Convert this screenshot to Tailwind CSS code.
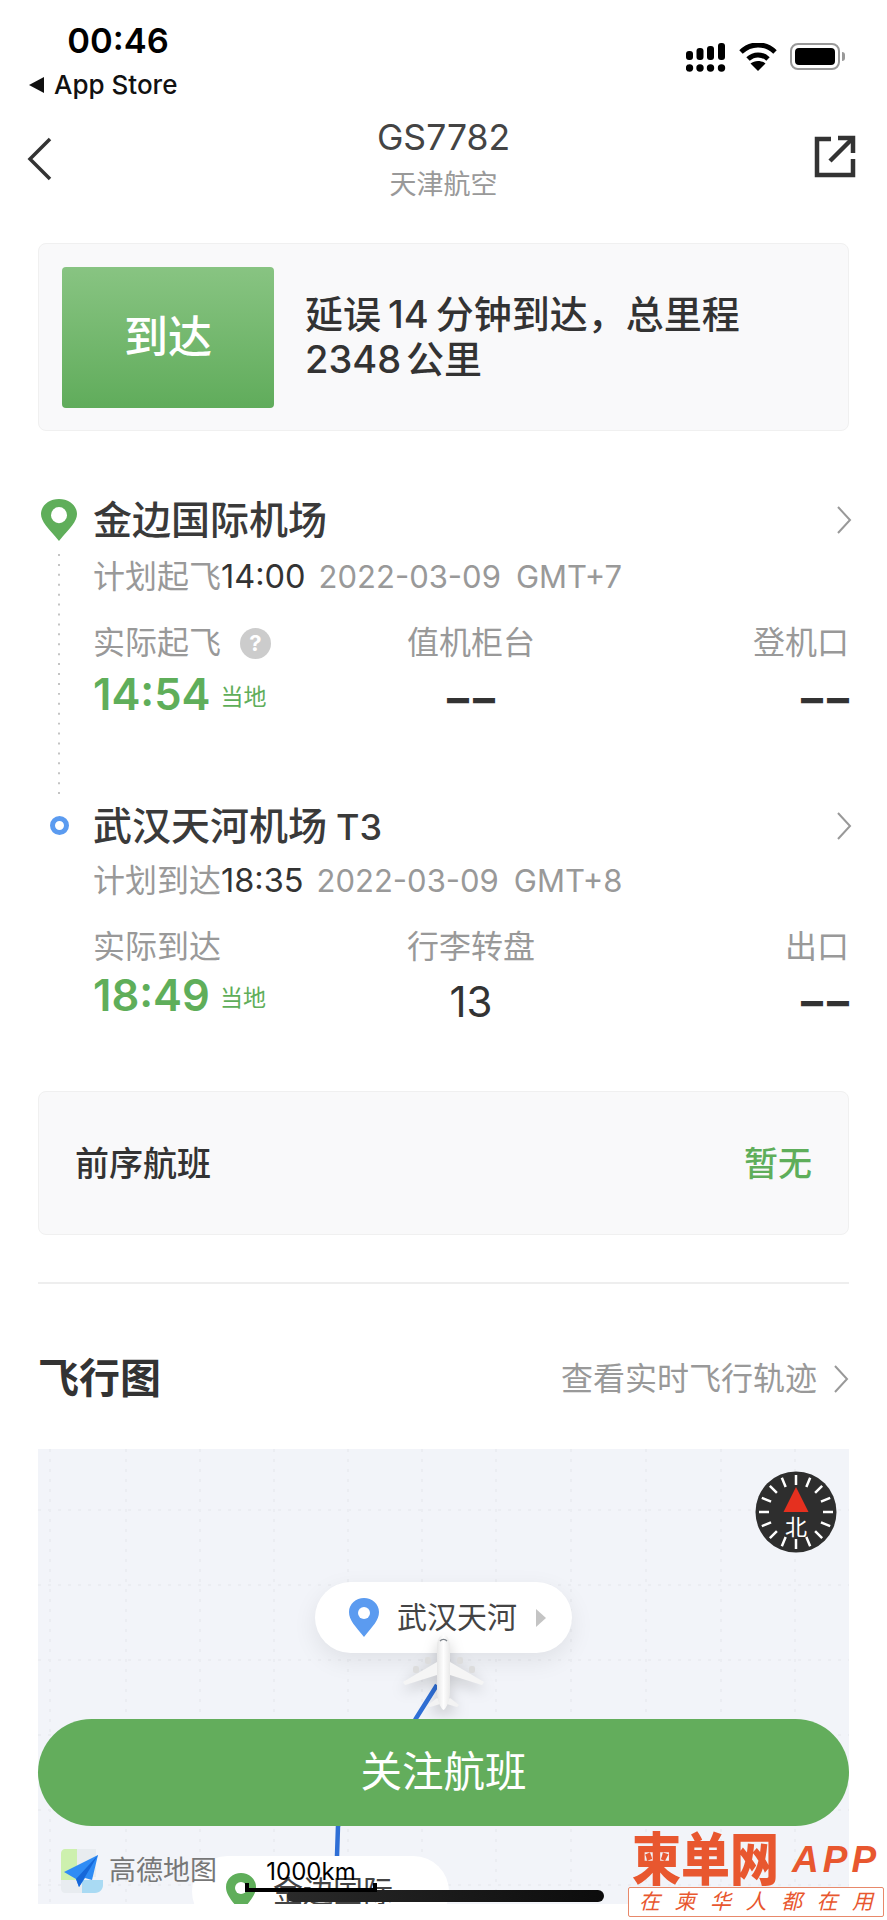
<!DOCTYPE html>
<html lang="zh-CN">
<head>
    <meta charset="UTF-8">
    <meta name="viewport" content="width=device-width, initial-scale=1.0">
    <title>GS7782 - 天津航空</title>
    <script src="https://cdn.jsdelivr.net/npm/@tailwindcss/browser@4"></script>
</head>
<body class="bg-white">
<div class="relative w-[887px] h-[1920px] overflow-hidden bg-white text-[#333] font-['Inter','Noto_Sans_CJK_SC',sans-serif]">

    <!-- status bar -->
    <div class="flex justify-between h-[113px] pl-[28px] pr-[42px]">
        <div>
            <div class="w-[180px] pt-[19px] text-center text-[34.500px] leading-[44px] font-semibold text-black">00:46</div>
            <div class="flex items-center gap-[8px] mt-[2px] text-[26px] leading-[40px] text-[#111]">
                <svg width="18" height="18" viewBox="0 0 18 18"><path d="M1 9 16 1v16z" fill="#111"/></svg>
                <span class="font-medium">App Store</span>
            </div>
        </div>
        <div class="flex items-start gap-[13px] pt-[43px]">
            <svg width="40" height="30" viewBox="0 0 40 30" fill="#000">
                <rect x="0" y="8" width="7" height="9" rx="3"/><rect x="10.500" y="5" width="7" height="12" rx="3"/><rect x="21" y="3" width="7" height="14" rx="3"/><rect x="32" y="0" width="7" height="17" rx="3"/>
                <circle cx="3.500" cy="25" r="3.700"/><circle cx="14" cy="25" r="3.700"/><circle cx="24.500" cy="25" r="3.700"/><circle cx="35.500" cy="25" r="3.700"/>
            </svg>
            <svg width="38" height="28" viewBox="0 0 38 28" fill="none" stroke="#000" stroke-width="5">
                <path d="M2 9C12-.500 26-.500 36 9"/><path d="M9 16c6-5.500 14-5.500 20 0"/><path d="M19 28l-7.500-7.500c4-3.500 11-3.500 15 0z" fill="#000" stroke="none"/>
            </svg>
            <div class="flex items-center gap-[2px]">
                <div class="w-[50px] h-[27px] p-[3px] border-2 border-[#999] rounded-[8px]"><div class="h-full w-[40px] bg-black rounded-[4px]"></div></div>
                <div class="w-[3px] h-[9px] bg-[#999] rounded-r-full"></div>
            </div>
        </div>
    </div>

    <!-- nav -->
    <div class="relative h-[130px] text-center">
        <div class="text-[35.500px] leading-[50px] text-[#444]">GS7782</div>
        <div class="text-[27px] leading-[40px] mt-[2px] text-[#999]">天津航空</div>
        <svg class="absolute left-[27px] top-[24px]" width="26" height="44" viewBox="0 0 26 44" fill="none" stroke="#333" stroke-width="3.500"><path d="M23 2 3 22l20 20"/></svg>
        <svg class="absolute left-[810px] top-[22px]" width="46" height="44" viewBox="0 0 46 44" fill="none" stroke="#333" stroke-width="4.500"><path d="M21 4H7v36h36V24"/><path d="M20 26 42 4"/><path d="M28 3h15v15" /></svg>
    </div>

    <!-- status card -->
    <div class="flex items-center mx-[38px] h-[188px] pl-[23px] bg-[#f9f9fa] border border-[#f0f0f0] rounded-[8px]">
        <div class="flex items-center justify-center w-[212px] h-[141px] rounded-[4px] bg-gradient-to-b from-[#88c482] to-[#60ac5b] text-white text-[44px] font-medium">到达</div>
        <div class="ml-[31px] w-[520px] text-[38px] leading-[45px] font-medium text-[#333]">延误<span class="mx-[7px]">14</span>分钟到达，总里程<br>2348<span class="ml-[5px]">公里</span></div>
    </div>

    <!-- departure -->
    <div class="flex mt-[65px] ml-[38px] mr-[38px] h-[306px]">
        <div class="flex flex-col items-center w-[42px] pt-[3px]">
            <svg class="shrink-0" width="38" height="42" viewBox="0 0 38 39" preserveAspectRatio="none"><path d="M19 39C8 27 1 21 1 14 1 6 9 0 19 0s18 6 18 14c0 7-7 13-18 25z" fill="#5fae5a"/><ellipse cx="19" cy="15" rx="8" ry="7.500" fill="#fff"/></svg>
            <svg class="mt-[13px]" width="2" height="250" viewBox="0 0 2 250"><path d="M1 0v250" stroke="#c4c4c4" stroke-width="2" stroke-dasharray="2 8"/></svg>
        </div>
        <div class="flex-1 ml-[13px]">
            <div class="flex justify-between items-center h-[48px] text-[39px] font-medium text-[#3a3a3a]">
                <span>金边国际机场</span>
                <svg class="-mr-[3px]" width="16" height="30" viewBox="0 0 16 30" fill="none" stroke="#999" stroke-width="2"><path d="M2 2l12 13L2 28"/></svg>
            </div>
            <div class="flex items-center h-[40px] mt-[13px] text-[31px] text-[#999]">
                <span class="text-[32px]">计划起飞</span><span class="text-[32.500px] text-[#333]">14:00</span><span class="ml-[13px]">2022-03-09</span><span class="ml-[15px]">GMT+7</span>
            </div>
            <div class="grid grid-cols-3 mt-[26px] text-[32px] leading-[40px] text-[#999]">
                <div class="flex items-center gap-[19px]">实际起飞<span class="flex items-center justify-center w-[31px] h-[31px] rounded-full bg-[#ccc] text-white text-[22px] font-bold">?</span></div>
                <div class="text-center">值机柜台</div>
                <div class="text-right">登机口</div>
            </div>
            <div class="grid grid-cols-3 items-center h-[50px] -mt-[1px]">
                <div class="flex items-center gap-[10px] text-[#5fae5a]"><span class="text-[43.500px] font-semibold">14:54</span><span class="text-[23px] mt-[6px]">当地</span></div>
                <div class="text-center text-[44px] leading-[50px] font-bold mt-[6px] pl-[4px] tracking-[4px] text-[#333]">––</div>
                <div class="text-right text-[44px] leading-[50px] font-bold mt-[6px] tracking-[4px] -mr-[4px] text-[#333]">––</div>
            </div>
        </div>
    </div>

    <!-- arrival -->
    <div class="flex ml-[38px] mr-[38px] h-[221px]">
        <div class="flex flex-col items-center w-[42px] pt-[14px]">
            <div class="w-[19px] h-[19px] border-[5px] border-[#5b9bf0] rounded-full"></div>
        </div>
        <div class="flex-1 ml-[13px]">
            <div class="flex justify-between items-center h-[48px] text-[39px] font-medium text-[#3a3a3a]">
                <span>武汉天河机场<span class="ml-[9px] text-[36px]">T3</span></span>
                <svg class="-mr-[3px]" width="16" height="30" viewBox="0 0 16 30" fill="none" stroke="#999" stroke-width="2"><path d="M2 2l12 13L2 28"/></svg>
            </div>
            <div class="flex items-center h-[40px] mt-[11px] text-[31px] text-[#999]">
                <span class="text-[32px]">计划到达</span><span class="text-[32.500px] text-[#333]">18:35</span><span class="ml-[13px]">2022-03-09</span><span class="ml-[15px]">GMT+8</span>
            </div>
            <div class="grid grid-cols-3 mt-[26px] text-[32px] leading-[40px] text-[#999]">
                <div>实际到达</div>
                <div class="text-center">行李转盘</div>
                <div class="text-right">出口</div>
            </div>
            <div class="grid grid-cols-3 items-center h-[50px] -mt-[4px]">
                <div class="flex items-center gap-[10px] text-[#5fae5a]"><span class="text-[43.500px] font-semibold">18:49</span><span class="text-[23px] mt-[6px]">当地</span></div>
                <div class="text-center text-[42px] leading-[50px] mt-[13px] text-[#333]">13</div>
                <div class="text-right text-[44px] leading-[50px] font-bold mt-[10px] tracking-[4px] -mr-[4px] text-[#333]">––</div>
            </div>
        </div>
    </div>

    <!-- previous flight -->
    <div class="flex justify-between items-center mx-[38px] mt-[68px] h-[144px] px-[36px] bg-[#f9f9fa] border border-[#f0f0f0] rounded-[8px] text-[34px] font-medium">
        <span>前序航班</span>
        <span class="text-[#5fae5a]">暂无</span>
    </div>

    <div class="mx-[38px] mt-[47px] h-[2px] bg-[#eeeeee]"></div>

    <!-- map heading -->
    <div class="flex justify-between items-center mx-[38px] mt-[65px] h-[60px]">
        <span class="text-[41px] font-bold text-[#333]">飞行图</span>
        <span class="flex items-center gap-[16px] text-[32px] text-[#999]">查看实时飞行轨迹
            <svg width="16" height="30" viewBox="0 0 16 30" fill="none" stroke="#999" stroke-width="2"><path d="M2 2l12 13L2 28"/></svg>
        </span>
    </div>

    <!-- map -->
    <div class="relative mx-[38px] mt-[40px] h-[455px] overflow-hidden bg-[#f2f4f9]">
        <svg class="absolute left-0 top-0" width="811" height="455" viewBox="0 0 811 455" fill="none">
            <g stroke="#ebedf2" stroke-width="2" stroke-dasharray="3 7">
                <path d="M12 0v455M88 0v455M162 0v455M236 0v455M310 0v455M384 0v455M458 0v455M533 0v455M608 0v455M683 0v455M757 0v455"/>
                <path d="M0 61h811M0 136h811M0 211h811M0 286h811M0 361h811M0 436h811"/>
            </g>
            <path d="M399 236 377 271 300 377 299 407" stroke="#2f6fd6" stroke-width="4.500"/>
        </svg>

        <!-- compass -->
        <svg class="absolute left-[717px] top-[22px]" width="82" height="82" viewBox="0 0 82 82">
            <circle cx="41" cy="41" r="40.500" fill="#2e2e2e"/>
            <g stroke="#fff" stroke-width="2.500" stroke-dasharray="10 54 10" fill="none">
                <path d="M41 4v74"/>
                <path d="M41 4v74" transform="rotate(22.500 41 41)"/>
                <path d="M41 4v74" transform="rotate(45 41 41)"/>
                <path d="M41 4v74" transform="rotate(67.500 41 41)"/>
                <path d="M41 4v74" transform="rotate(90 41 41)"/>
                <path d="M41 4v74" transform="rotate(112.500 41 41)"/>
                <path d="M41 4v74" transform="rotate(135 41 41)"/>
                <path d="M41 4v74" transform="rotate(157.500 41 41)"/>
            </g>
            <path d="M41 16 53.500 41h-25z" fill="#e5301f"/>
            <text x="41" y="64" text-anchor="middle" font-size="22" fill="#fff" font-family="Noto Sans CJK SC">北</text>
        </svg>

        <!-- destination pill -->
        <div class="absolute left-[277px] top-[133px] flex items-center w-[257px] h-[71px] pl-[34px] bg-white rounded-full shadow-[0_8px_24px_rgba(0,0,0,0.08)] text-[30px] text-[#444]">
            <svg width="30" height="39" viewBox="0 0 30 39"><path d="M15 39C6 28 0 22 0 14 0 6 7 0 15 0s15 6 15 14c0 8-6 14-15 25z" fill="#5b9bf0"/><circle cx="15" cy="15" r="6" fill="#fff"/></svg>
            <span class="ml-[18px]">武汉天河</span>
            <span class="ml-[19px] w-0 h-0 border-y-[9px] border-y-transparent border-l-[10px] border-l-[#c4c4c4]"></span>
        </div>

        <!-- plane -->
        <svg class="absolute left-[362px] top-[184px] drop-shadow-[0_6px_7px_rgba(0,0,0,0.18)]" width="90" height="80" viewBox="0 0 90 80">
            <defs><linearGradient id="body" x1="0" x2="1" y1="0" y2="0"><stop offset="0" stop-color="#e6e6e6"/><stop offset=".5" stop-color="#fefefe"/><stop offset="1" stop-color="#e9e9e9"/></linearGradient></defs>
            <path d="M37 29 3 49l2 3 32-10zM50 29l34 20-2 3-32-10z" fill="#f5f5f5"/>
            <path d="M37 65l-9 7 2 2 13.500-4zM50 65l9 7-2 2-13.500-4z" fill="#f3f3f3"/>
            <path d="M43.500 2c4 0 6.500 5 6.500 12v44c0 8-3 17-6.500 19-3.500-2-6.500-11-6.500-19V14c0-7 2.500-12 6.500-12z" fill="url(#body)"/>
            <path d="M40 8c2-2 5-2 7 0" stroke="#7d838a" stroke-width="1.500" fill="none"/>
            <g fill="#dcdcdc"><rect x="25" y="24" width="6" height="7" rx="2"/><rect x="13" y="33" width="6" height="7" rx="2"/><rect x="57" y="24" width="6" height="7" rx="2"/><rect x="69" y="33" width="6" height="7" rx="2"/></g>
        </svg>

        <!-- origin pill -->
        <div class="absolute left-[154px] top-[407px] flex items-start w-[257px] h-[71px] pl-[34px] pt-[17px] bg-white rounded-full text-[30px] text-[#444]">
            <svg width="30" height="39" viewBox="0 0 30 39"><path d="M15 39C6 28 0 22 0 14 0 6 7 0 15 0s15 6 15 14c0 8-6 14-15 25z" fill="#5fae5a"/><circle cx="15" cy="15" r="6" fill="#fff"/></svg>
            <span class="ml-[17px] leading-[36px]">金边国际</span>
        </div>

        <!-- amap logo -->
        <div class="absolute left-[23px] top-[400px] z-10 flex items-center gap-[1px]">
            <svg width="47" height="44" viewBox="0 0 47 44">
                <path d="M16 0H4C2 0 0 2 0 4v27h16z" fill="#cdf0ae"/>
                <path d="M16 0h19v28H16z" fill="#e8ecf0"/>
                <path d="M0 31h21v13H4c-2 0-4-2-4-4z" fill="#e8ecf0"/>
                <path d="M21 31h21v5c0 4-3 8-8 8H21z" fill="#a9daf3"/>
                <path d="M37 6 3 23l12 7 3 8 6-9 7 2z" fill="#2f8cf5"/>
                <path d="M15 30 37 6 18 38z" fill="#1667d9"/>
            </svg>
            <span class="text-[27px] text-[#777]">高德地图</span>
        </div>

        <!-- scale -->
        <div class="absolute left-[207px] top-[409px] z-10 w-[132px]">
            <div class="text-center text-[24px] leading-[28px] text-black">1000km</div>
            <div class="-mt-[3px] h-[9px] border-x-4 border-b-4 border-black"></div>
        </div>
    </div>

    <!-- follow button -->
    <div class="absolute left-[38px] top-[1719px] flex items-center justify-center w-[811px] h-[107px] rounded-full bg-[#63ad5c] text-white text-[41.500px]">关注航班</div>

    <!-- home indicator -->
    <div class="absolute left-[287px] top-[1890px] w-[317px] h-[12px] rounded-full bg-gradient-to-r from-[#2a2a2a] to-[#0c0c0c]"></div>

    <!-- watermark -->
    <div class="absolute left-[628px] top-[1832px] w-[256px]">
        <div class="flex items-center whitespace-nowrap h-[56px] pl-[4px] text-[#e8572f] font-bold">
            <span class="shrink-0 text-[49px] leading-[56px] font-black scale-y-115">柬单网</span>
            <span class="shrink-0 ml-[13px] text-[37px] italic tracking-[4px] font-['Liberation_Sans',sans-serif]">APP</span>
        </div>
        <div class="flex justify-between items-center whitespace-nowrap h-[30px] -mt-[1px] px-[10px] border border-[#e8886a] rounded-[2px] bg-white text-[#e8572f] text-[21px] leading-[26px] italic">
            <span>在</span><span>柬</span><span>华</span><span>人</span><span>都</span><span>在</span><span>用</span>
        </div>
    </div>
</div>
</body>
</html>
